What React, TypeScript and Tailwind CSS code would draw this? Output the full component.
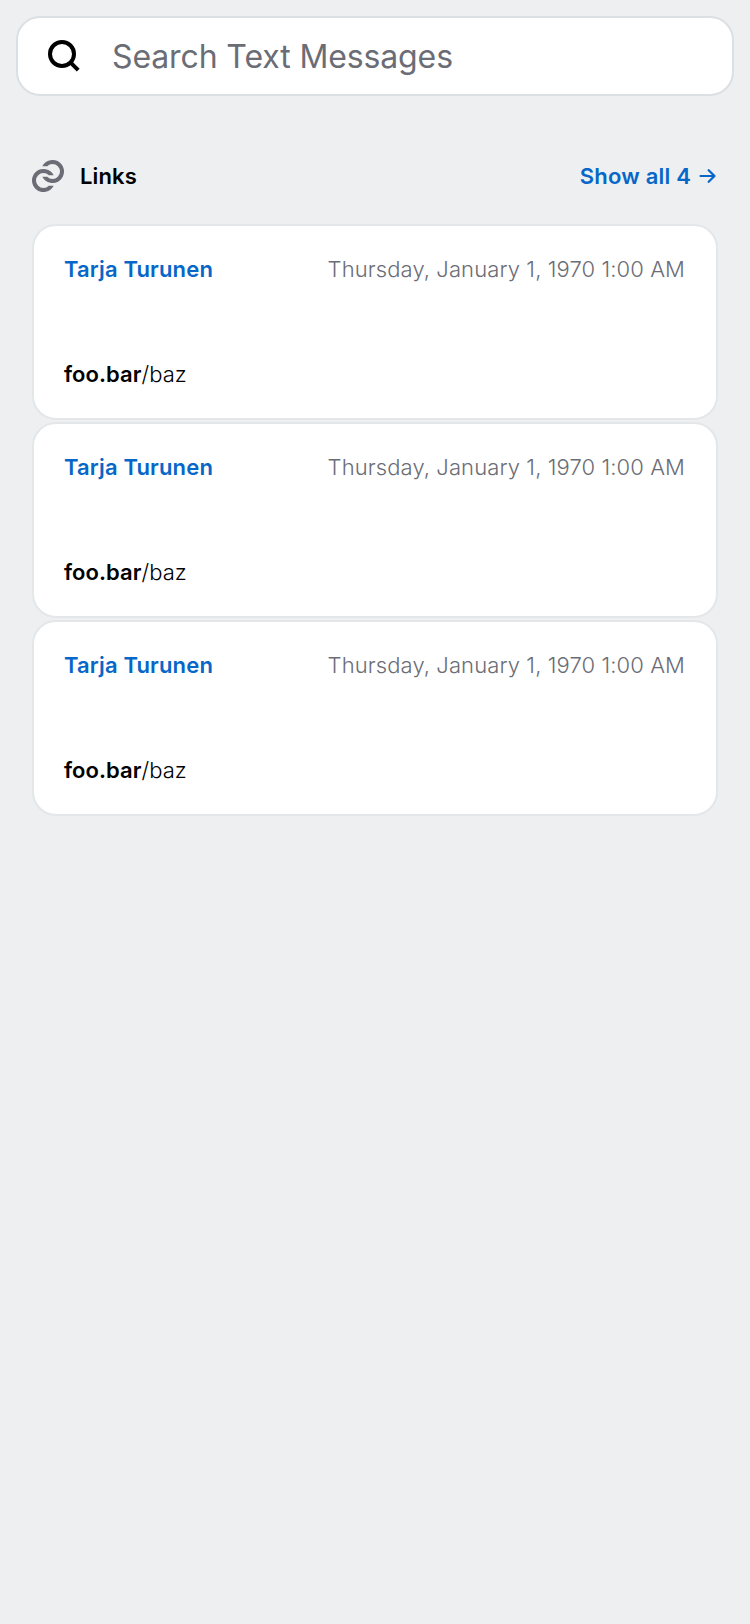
const items = [1, 2, 3];

export default function App() {
  return (
    <main className="flex h-[1624px] w-[750px] flex-col bg-[#edeff0] p-4 font-[Inter,sans-serif]">
      <div className="flex h-20 items-center rounded-3xl border-2 border-[#dae0e4] bg-white pl-[30px]">
        <svg className="size-8" viewBox="0 0 32 32" fill="none" stroke="#000" strokeWidth="4">
          <circle cx="14" cy="14" r="12" />
          <path d="M22.4 22.4 30.2 30.2" />
        </svg>
        <span className="ml-8 pt-0.5 text-[32px] leading-10 tracking-[-0.12px] text-[#6b6d76]">Search Text Messages</span>
      </div>
      <header className="mt-[60px] flex h-10 items-center px-4">
        <svg className="size-8" viewBox="0 0 32 32" fill="#6b6d76">
          <path d="M10.3 6.2A11.5 11.5 0 1 1 10.3 16.8H15.2A7.5 7.5 0 1 0 15.2 6.2Z" />
          <path d="M21.7 25.8A11.5 11.5 0 1 1 21.7 15.2H16.8A7.5 7.5 0 1 0 16.8 25.8Z" />
        </svg>
        <h2 className="ml-4 text-[22px] font-semibold tracking-[0.15px] text-black">Links</h2>
        <a className="mr-0.5 ml-auto flex items-center gap-2 text-[22px] font-semibold tracking-[0.2px] text-[#0667c8]">
          Show all 4
          <svg className="h-4 w-[17px]" viewBox="0 0 17 16" fill="none" stroke="currentColor" strokeWidth="2.2" strokeLinecap="round" strokeLinejoin="round">
            <path d="M1.5 8H15.5M9.7 2.2 15.5 8 9.7 13.8" />
          </svg>
        </a>
      </header>
      <section className="mt-7 flex flex-col gap-0.5 px-4">
        {items.map((id) => (
          <article key={id} className="flex h-[196px] flex-col justify-between rounded-3xl border-2 border-[#e4e7e9] bg-white px-[30px] pt-[27px] pb-7">
            <div className="flex justify-between text-[22px] leading-8">
              <span className="font-semibold tracking-[0.15px] text-[#0667c8]">Tarja Turunen</span>
              <time className="pr-px font-light tracking-[0.1px] text-[#6b6d76]">Thursday, January 1, 1970 1:00 AM</time>
            </div>
            <p className="text-[22px] leading-8 font-light tracking-[0.05px] text-black"><strong className="font-semibold">foo.bar</strong>/baz</p>
          </article>
        ))}
      </section>
    </main>
  );
}
